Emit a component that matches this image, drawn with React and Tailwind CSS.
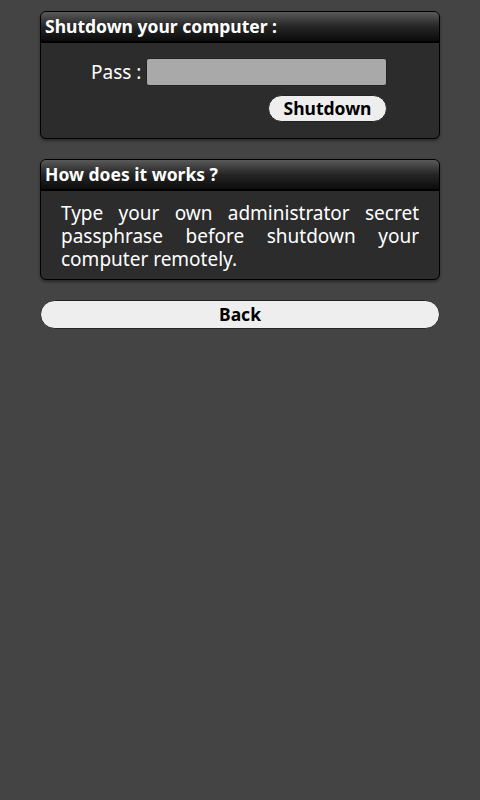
export default function App() {
  return (
    <div
      className="min-h-[800px] w-full bg-[#444444] px-10 pt-[11px]"
      style={{ fontFamily: '"Noto Sans", "Open Sans", sans-serif' }}
    >
      {/* Shutdown card */}
      <div className="overflow-hidden rounded-[6px] border border-black bg-[#2c2c2c] shadow-[0_2px_3px_rgba(0,0,0,0.4)]">
        <div className="h-[31px] border-b-2 border-black bg-gradient-to-b from-[#5a5a5a] via-[#262626] to-[#0c0c0c] pl-[4px] text-[17.5px] font-bold leading-[28px] text-white">
          Shutdown your computer :
        </div>
        <div className="flex flex-col items-end pb-[16px] pl-[50px] pr-[52px] pt-[15px]">
          <div className="flex w-full items-center gap-[5px]">
            <span className="text-[19px] leading-none text-white">Pass :</span>
            <div className="h-[28px] flex-1 rounded-[3px] border border-[#222] bg-[#a9a9a9]" />
          </div>
          <button className="mt-[9px] h-[27px] w-[119px] rounded-full border border-[#222] bg-[#eeeeee] text-[17.5px] font-bold leading-none text-black">
            Shutdown
          </button>
        </div>
      </div>

      {/* Info card */}
      <div className="mt-[20px] overflow-hidden rounded-[6px] border border-black bg-[#2c2c2c] shadow-[0_2px_3px_rgba(0,0,0,0.4)]">
        <div className="h-[31px] border-b-2 border-black bg-gradient-to-b from-[#5a5a5a] via-[#262626] to-[#0c0c0c] pl-[4px] text-[17.5px] font-bold leading-[28px] text-white">
          How does it works ?
        </div>
        <p className="px-[20px] pb-[8px] pt-[11px] text-justify text-[19px] leading-[23px] text-white">
          Type your own administrator secret passphrase before shutdown your computer remotely.
        </p>
      </div>

      <button className="mt-[20px] h-[29px] w-full rounded-full border border-[#222] bg-[#eeeeee] text-[17.5px] font-bold leading-none text-black">
        Back
      </button>
    </div>
  );
}
